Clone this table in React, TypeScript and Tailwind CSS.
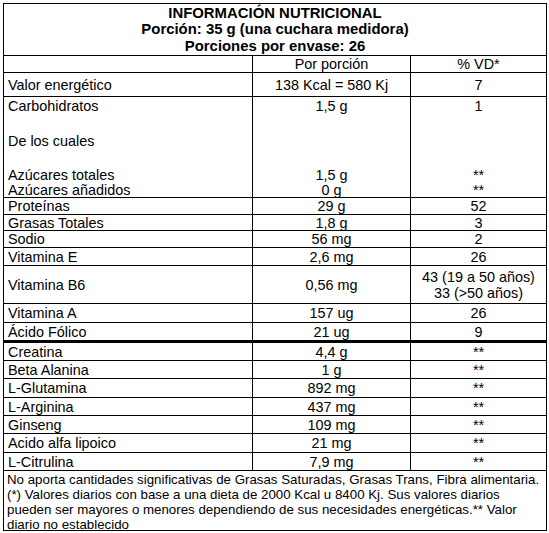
import type { ReactNode } from "react";

type Row = { name: string; amount: string; vd: ReactNode; h: string };

const vitamins: Row[] = [
  { name: "Proteínas", amount: "29 g", vd: "52", h: "h-[17px]" },
  { name: "Grasas Totales", amount: "1,8 g", vd: "3", h: "h-[16px]" },
  { name: "Sodio", amount: "56 mg", vd: "2", h: "h-[17px]" },
  { name: "Vitamina E", amount: "2,6 mg", vd: "26", h: "h-[18px]" },
  {
    name: "Vitamina B6",
    amount: "0,56 mg",
    vd: (
      <>
        <span>43 (19 a 50 años)</span>
        <span>33 (&gt;50 años)</span>
      </>
    ),
    h: "h-[38px]",
  },
  { name: "Vitamina A", amount: "157 ug", vd: "26", h: "h-[19px]" },
];

const extras: Row[] = [
  { name: "Creatina", amount: "4,4 g", vd: "**", h: "h-[18px]" },
  { name: "Beta Alanina", amount: "1 g", vd: "**", h: "h-[18px]" },
  { name: "L-Glutamina", amount: "892 mg", vd: "**", h: "h-[19px]" },
  { name: "L-Arginina", amount: "437 mg", vd: "**", h: "h-[18px]" },
  { name: "Ginseng", amount: "109 mg", vd: "**", h: "h-[18px]" },
  { name: "Acido alfa lipoico", amount: "21 mg", vd: "**", h: "h-[19px]" },
  { name: "L-Citrulina", amount: "7,9 mg", vd: "**", h: "h-[18px]" },
];

const cols = "grid grid-cols-[249px_158px_1fr]";

function TableRow({ row, thick }: { row: Row; thick?: boolean }) {
  return (
    <div
      className={`${cols} ${row.h} ${thick ? "border-b-[3px]" : "border-b"} border-black`}
    >
      <div className="flex items-center border-r border-black pl-[4px]">
        {row.name}
      </div>
      <div className="flex items-center justify-center border-r border-black">
        {row.amount}
      </div>
      <div className="flex flex-col items-center justify-center">{row.vd}</div>
    </div>
  );
}

function SubRow({
  cells,
  h,
  last,
  pt,
}: {
  cells: [string, string, string];
  h: string;
  last?: boolean;
  pt?: string;
}) {
  return (
    <div className={`${cols} ${h} ${last ? "border-b border-black" : ""}`}>
      <div className={`border-r border-black pl-[4px] ${pt ?? ""}`}>
        {cells[0]}
      </div>
      <div className={`border-r border-black text-center ${pt ?? ""}`}>
        {cells[1]}
      </div>
      <div className={`text-center ${pt ?? ""}`}>{cells[2]}</div>
    </div>
  );
}

export default function App() {
  return (
    <div className="min-h-screen bg-white p-[3px] font-['Liberation_Sans',Arial,sans-serif] text-[14.4px] leading-[16px] text-black">
      <div className="w-[544px] border border-black">
        {/* Encabezado */}
        <div className="flex h-[52px] flex-col items-center justify-center border-b border-black text-[14.9px] font-bold leading-[16.5px]">
          <span>INFORMACIÓN NUTRICIONAL</span>
          <span>Porción: 35 g (una cuchara medidora)</span>
          <span>Porciones por envase: 26</span>
        </div>

        <TableRow row={{ name: "", amount: "Por porción", vd: "% VD*", h: "h-[17px]" }} />
        <TableRow
          row={{
            name: "Valor energético",
            amount: "138 Kcal = 580 Kj",
            vd: "7",
            h: "h-[24px]",
          }}
        />

        {/* Carbohidratos */}
        <SubRow cells={["Carbohidratos", "1,5 g", "1"]} h="h-[36px]" pt="pt-[1px]" />
        <SubRow cells={["De los cuales", "", ""]} h="h-[34px]" />
        <SubRow cells={["Azúcares totales", "1,5 g", "**"]} h="h-[15px]" />
        <SubRow cells={["Azúcares añadidos", "0 g", "**"]} h="h-[16px]" last />

        {vitamins.map((r) => (
          <TableRow key={r.name} row={r} />
        ))}
        <TableRow
          row={{ name: "Ácido Fólico", amount: "21 ug", vd: "9", h: "h-[20px]" }}
          thick
        />

        {extras.map((r) => (
          <TableRow key={r.name} row={r} />
        ))}

        {/* Nota */}
        <div className="h-[59px] pl-[3px] pr-[2px] pt-[1px] text-[13.3px] leading-[15px]">
          <p>
            No aporta cantidades significativas de Grasas Saturadas, Grasas
            Trans, Fibra alimentaria.
          </p>
          <p>
            (*) Valores diarios con base a una dieta de 2000 Kcal u 8400 Kj. Sus
            valores diarios pueden ser mayores o menores dependiendo de sus
            necesidades energéticas.** Valor diario no establecido
          </p>
        </div>
      </div>
    </div>
  );
}
